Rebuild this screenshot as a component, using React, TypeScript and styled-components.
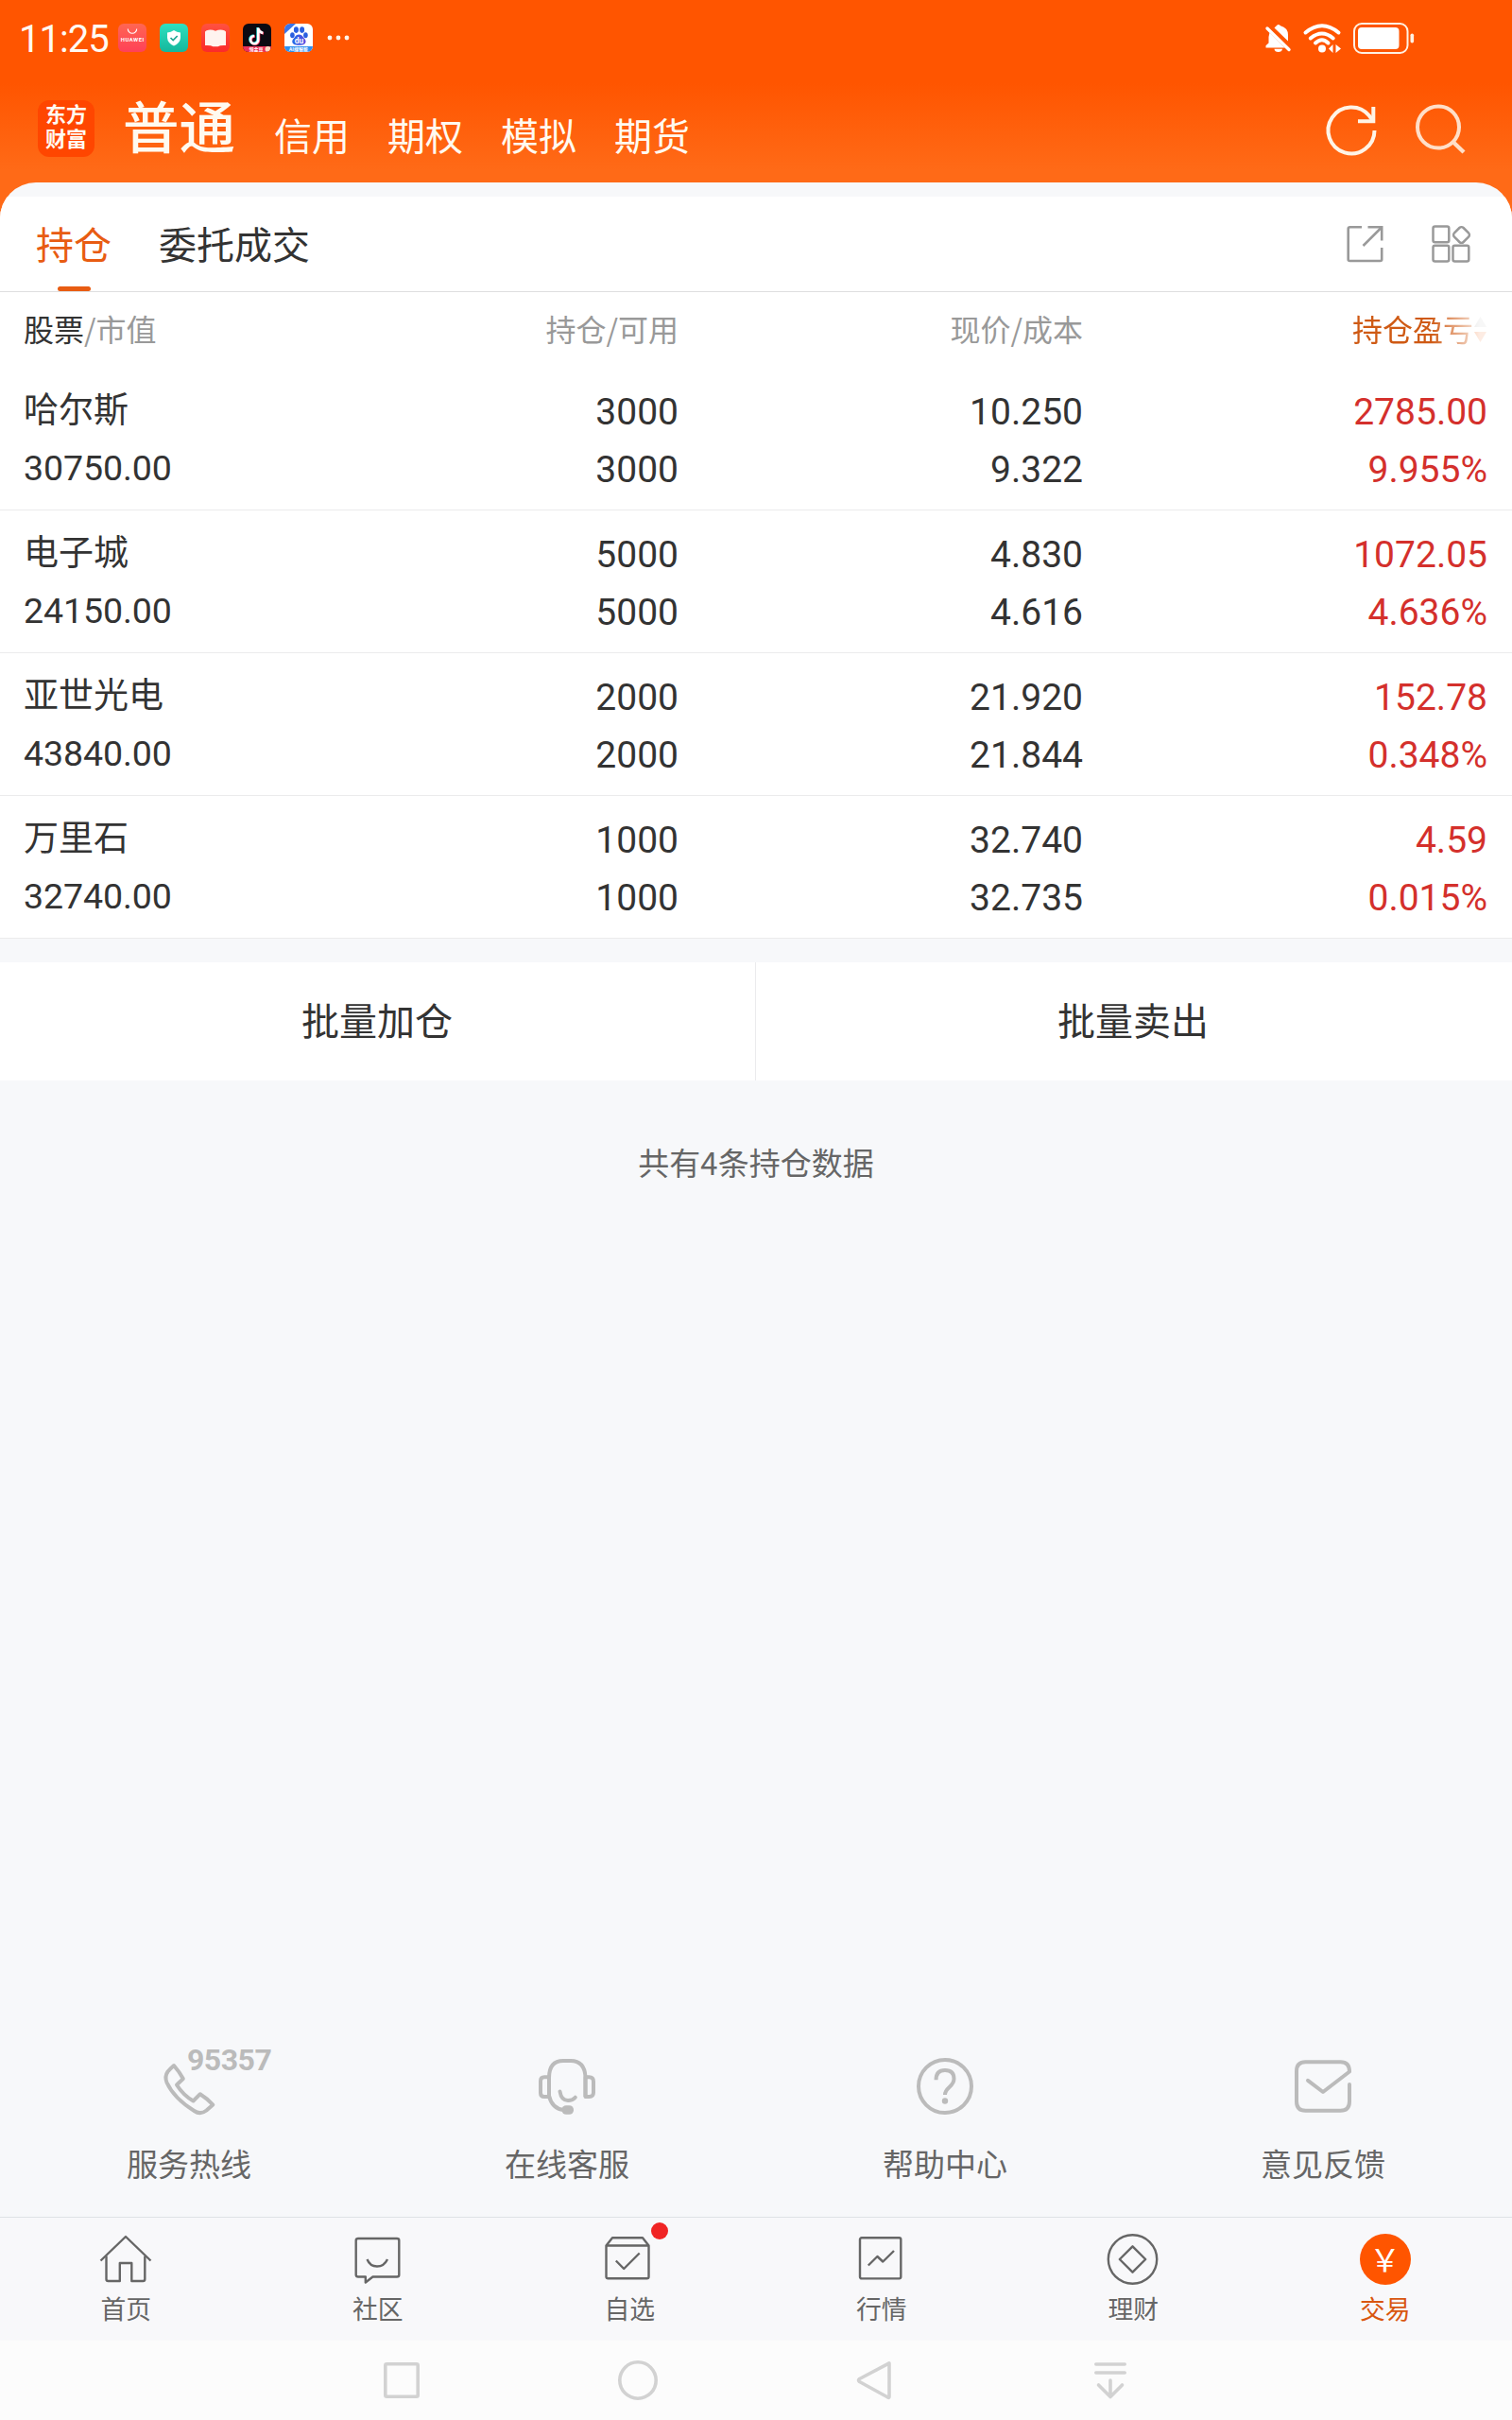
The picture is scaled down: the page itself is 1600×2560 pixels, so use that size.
import React from "react";
import styled, { createGlobalStyle } from "styled-components";

const CJK = `"Noto Sans CJK SC", sans-serif`;
const NUM = `Roboto, "Noto Sans CJK SC", sans-serif`;

const GlobalStyle = createGlobalStyle`
  * { box-sizing: border-box; }
  body { margin: 0; background: #f7f8fa; font-family: ${CJK}; color: #333; }
  svg { display: block; overflow: visible; flex: none; }
`;

const Screen = styled.div`
  width: 1600px;
  height: 2560px;
  display: flex;
  flex-direction: column;
  overflow: hidden;
  background: #f7f8fa;
`;

/* ---------- orange top area ---------- */

const TopArea = styled.header`
  height: 250px;
  margin-bottom: -57px;
  flex: none;
  background: linear-gradient(#ff5500 0, #ff5500 88px, #ff6a17 180px, #ff6a17 100%);
`;

const StatusBar = styled.div`
  height: 80px;
  padding: 0 103px 0 20px;
  display: flex;
  align-items: center;
  justify-content: space-between;
`;

const StatusGroup = styled.div<{ $gap: number }>`
  display: flex;
  align-items: center;
  gap: ${(p) => p.$gap}px;
`;

const Clock = styled.span`
  width: 91px;
  font: 400 40px/80px ${NUM};
  letter-spacing: -1px;
  color: #fffaf2;
  white-space: nowrap;
  padding-top: 3px;
`;

const NavBar = styled.nav`
  height: 113px;
  padding: 26px 49px 0 40px;
  display: flex;
  align-items: flex-start;
`;

const BrandLogo = styled.div`
  width: 60px;
  height: 60px;
  padding-top: 3px;
  border-radius: 12px;
  background: #ff4600;
  color: #fffaf2;
  text-align: center;
`;

const BrandLine = styled.div`
  height: 26px;
  font: 700 22px/26px ${NUM};
`;

const AccountMain = styled.span`
  width: 120px;
  margin-left: 30px;
  font-size: 59.5px;
  line-height: 50px;
  font-weight: 500;
  color: #fffaf0;
`;

const AccountTabs = styled.div`
  margin-left: 40px;
  display: flex;
  gap: 40px;
`;

const AccountTab = styled.span`
  font-size: 40px;
  line-height: 72px;
  color: #fffaf0;
`;

const NavActions = styled.div`
  margin-left: auto;
  padding-top: 3px;
  display: flex;
  gap: 40px;
`;

/* ---------- white sheet ---------- */

const Sheet = styled.main`
  position: relative;
  flex: 1;
  display: flex;
  flex-direction: column;
  padding-top: 15px;
  border-radius: 38px 38px 0 0;
  overflow: hidden;
  background: #f7f8fa;
`;

const TabStrip = styled.div`
  height: 101px;
  flex: none;
  padding: 0 43px 0 38px;
  display: flex;
  align-items: center;
  background: #fff;
  border-bottom: 1px solid #dfdfe0;
`;

const SheetTab = styled.div<{ $active?: boolean }>`
  position: relative;
  height: 100px;
  margin-right: 50px;
  font-size: 40px;
  line-height: 98px;
  color: ${(p) => (p.$active ? "#e85c12" : "#333")};
  ${(p) =>
    p.$active &&
    `&::after {
      content: "";
      position: absolute;
      left: 23px;
      bottom: 0;
      width: 35px;
      height: 5px;
      border-radius: 3px;
      background: #e85c12;
    }`}
`;

const StripActions = styled.div`
  margin-left: auto;
  display: flex;
  gap: 51px;
`;

const Table = styled.section`
  flex: none;
  background: #fff;
`;

const GridRow = styled.div`
  display: grid;
  grid-template-columns: 347px 346px 428px 428px;
  padding: 0 26px 0 25px;
`;

const HeadRow = styled(GridRow)`
  height: 80px;
`;

const HeadCell = styled.div<{ $left?: boolean }>`
  font-size: 32px;
  line-height: 77px;
  color: #999;
  text-align: ${(p) => (p.$left ? "left" : "right")};
  b {
    font-weight: 400;
    color: #333;
  }
`;

const SortCell = styled.div`
  display: flex;
  align-items: center;
  justify-content: flex-end;
  font-size: 32px;
  line-height: 77px;
  padding-bottom: 3px;
  color: #cf5a14;
  mask-image: linear-gradient(to right, #000 calc(100% - 60px), rgba(0, 0, 0, 0.12) calc(100% - 8px));
`;

const StockRow = styled(GridRow)`
  height: 151px;
  border-bottom: 1px solid #ebebec;
`;

const NameCell = styled.div`
  padding-top: 11px;
  display: flex;
  flex-direction: column;
  gap: 2px;
  line-height: 62px;
`;

const StockName = styled.span`
  font-size: 37px;
`;

const MarketValue = styled.span`
  font-family: ${NUM};
  font-size: 37.5px;
  letter-spacing: -0.1px;
`;

const ValueCell = styled.div<{ $gain?: boolean }>`
  padding-top: 17px;
  display: flex;
  flex-direction: column;
  align-items: flex-end;
  font: 400 39px/61px ${NUM};
  color: ${(p) => (p.$gain ? "#d4302c" : "#333")};
`;

const BatchBar = styled.div`
  flex: none;
  height: 125px;
  margin-top: 25px;
  display: grid;
  grid-template-columns: 1fr 1fr;
  background: #fff;
`;

const BatchButton = styled.button`
  border: 0;
  background: none;
  padding: 0 2px 5px 0;
  font: 400 40px/1 ${CJK};
  color: #333;
  & + & {
    border-left: 1px solid #ebebed;
    margin-left: -1px;
  }
`;

const CountNote = styled.p`
  flex: 1;
  margin: 0;
  text-align: center;
  font-size: 33px;
  line-height: 172px;
  color: #666;
`;

/* ---------- service shortcuts ---------- */

const Services = styled.section`
  flex: none;
  height: 168px;
  display: grid;
  grid-template-columns: repeat(4, 1fr);
`;

const Service = styled.div`
  display: flex;
  flex-direction: column;
  align-items: center;
  gap: 31px;
  font-size: 33px;
  line-height: 40px;
  color: #666;
`;

const ServiceIcon = styled.div`
  position: relative;
  width: 60px;
  height: 60px;
`;

const HotlineNumber = styled.span`
  position: absolute;
  left: 28px;
  top: -14px;
  font: 700 32px/32px ${NUM};
  letter-spacing: -0.5px;
  color: #bbb;
`;

/* ---------- bottom bars ---------- */

const BottomTabs = styled.nav`
  flex: none;
  height: 131px;
  padding: 17px 1px 0 0;
  display: grid;
  grid-template-columns: repeat(6, 1fr);
  background: #f8f8fa;
  border-top: 1px solid #dfe2e5;
`;

const BottomTab = styled.div<{ $active?: boolean }>`
  display: flex;
  flex-direction: column;
  align-items: center;
  gap: 9px;
  font-size: 26.8px;
  line-height: 32px;
  color: ${(p) => (p.$active ? "#d9560f" : "#666")};
`;

const TabIcon = styled.div`
  position: relative;
  width: 54px;
  height: 54px;
`;

const UnreadDot = styled.i`
  position: absolute;
  right: -14px;
  top: -12px;
  width: 18px;
  height: 18px;
  border-radius: 50%;
  background: #f02424;
`;

const SystemNav = styled.div`
  flex: none;
  height: 84px;
  padding: 0 300px;
  display: grid;
  grid-template-columns: repeat(4, 1fr);
  place-items: center;
  background: #fcfcfc;
`;

/* ---------- icons ---------- */

const AppIcons = () => (
  <>
    <svg width="30" height="30" viewBox="0 0 30 30">
      <defs>
        <linearGradient id="hw" x1="0" y1="0" x2="0" y2="1">
          <stop offset="0" stopColor="#ff6652" />
          <stop offset="1" stopColor="#ff4058" />
        </linearGradient>
      </defs>
      <rect width="30" height="30" rx="6" fill="url(#hw)" />
      <path d="M10.3 5.5a4.7 4.7 0 0 0 9.4 0" fill="none" stroke="#fff" strokeWidth="1.1" />
      <text x="15" y="19.4" textAnchor="middle" fontFamily="Roboto, sans-serif" fontWeight="700" fontSize="5.8" textLength="24.5" fill="#fff">
        HUAWEI
      </text>
    </svg>
    <svg width="30" height="30" viewBox="0 0 30 30">
      <defs>
        <linearGradient id="sh" x1="0" y1="0" x2="0" y2="1">
          <stop offset="0" stopColor="#2fe0c0" />
          <stop offset="1" stopColor="#14b79c" />
        </linearGradient>
      </defs>
      <rect width="30" height="30" rx="6" fill="url(#sh)" />
      <path d="M15 7Q18 9.3 22 9.6V15Q21.6 20.5 15 23.6Q8.4 20.5 8 15V9.6Q12 9.3 15 7Z" fill="#fff" />
      <path d="M11.5 15l2.7 2.6 4.5-4.6" fill="none" stroke="#1fa792" strokeWidth="1.7" />
    </svg>
    <svg width="30" height="30" viewBox="0 0 30 30">
      <defs>
        <linearGradient id="bk" x1="0" y1="0" x2="0" y2="1">
          <stop offset="0" stopColor="#ff5140" />
          <stop offset="1" stopColor="#fb2a2a" />
        </linearGradient>
      </defs>
      <rect width="30" height="30" rx="6" fill="url(#bk)" />
      <path d="M5.6 7.2Q10.5 5.8 15 7.8Q19.5 5.8 24.4 7.2L26 8.6V23Q20 22.6 17.6 24.2H12.4Q10 22.6 4 23V8.6Z" fill="#fff3ef" />
    </svg>
    <svg width="30" height="30" viewBox="0 0 30 30">
      <defs>
        <clipPath id="tk">
          <rect width="30" height="30" rx="6" />
        </clipPath>
      </defs>
      <g clipPath="url(#tk)">
        <rect width="30" height="30" fill="#0b0a12" />
        <g fill="none" strokeWidth="2.6">
          <path d="M15.6 4v12.6a4.1 4.1 0 1 1-4.1-4.1M15.6 4.6q.8 4.2 5 4.8" stroke="#35e6e4" />
          <path d="M17 5v12.6a4.1 4.1 0 1 1-4.1-4.1M17 5.6q.8 4.2 5 4.8" stroke="#f2335b" />
          <path d="M16.3 4.5v12.6a4.1 4.1 0 1 1-4.1-4.1M16.3 5.1q.8 4.2 5 4.8" stroke="#fff" />
        </g>
        <path d="M0 24H30V30H0Z" fill="#ec3158" />
        <text x="14" y="29" textAnchor="middle" fontFamily={CJK} fontWeight="700" fontSize="5" fill="#fff">
          领金豆
        </text>
        <circle cx="26.5" cy="27" r="3" fill="#ffd9c4" />
      </g>
    </svg>
    <svg width="30" height="30" viewBox="0 0 30 30">
      <defs>
        <clipPath id="bd">
          <rect width="30" height="30" rx="6" />
        </clipPath>
        <linearGradient id="paw" x1="0" y1="0" x2="1" y2="0">
          <stop offset="0" stopColor="#2468e6" />
          <stop offset="1" stopColor="#5a4be0" />
        </linearGradient>
      </defs>
      <g clipPath="url(#bd)">
        <rect width="30" height="30" fill="#fff" />
        <path d="M0 0H12L0 11Z" fill="#3b74e8" />
        <g fill="#2a5fe0">
          <ellipse cx="12.4" cy="6.6" rx="2.5" ry="3.3" />
          <ellipse cx="18.6" cy="6.6" rx="2.5" ry="3.3" />
          <ellipse cx="8.4" cy="12.2" rx="2.3" ry="3" />
          <ellipse cx="22.4" cy="12.2" rx="2.3" ry="3" />
        </g>
        <path
          d="M15.400 11.500Q18.400 11.500 20.400 14.900Q23.800 17.900 21.900 21.100Q20.300 23.100 15.400 22.700Q10.500 23.100 8.900 21.100Q7 17.900 10.400 14.900Q12.400 11.500 15.400 11.500Z"
          fill="url(#paw)"
        />
        <text x="15.500" y="21" textAnchor="middle" fontFamily="Roboto, sans-serif" fontWeight="700" fontSize="8.500" fill="#fff">
          du
        </text>
        <rect y="24" width="30" height="6" fill="#2f8fee" />
        <text x="15" y="29" textAnchor="middle" fontFamily={CJK} fontWeight="700" fontSize="5" fill="#fff">
          AI搜智能
        </text>
      </g>
    </svg>
    <svg width="26" height="30" viewBox="0 0 26 30" fill="#fff3e8">
      <circle cx="4" cy="15" r="2.4" />
      <circle cx="13" cy="15" r="2.4" />
      <circle cx="22" cy="15" r="2.4" />
    </svg>
  </>
);

const MuteIcon = () => (
  <svg width="27" height="31" viewBox="0 0 27 31">
    <path d="M4.500 9.500L20.500 25.500H.5V23.200L3.500 20.500V14Z" fill="#fff" />
    <path d="M9.500 4.500Q11 3 11.500 2.500Q13.500-.6 16 2.300Q24 4.500 24 12V18.500Z" fill="#fff" />
    <path d="M9.500 26.800H18Q17.500 30 13.700 30T9.500 26.800Z" fill="#fff" />
    <path d="M2 5L25 27.500" stroke="#fff" strokeWidth="3.400" strokeLinecap="round" />
  </svg>
);

const WifiIcon = () => (
  <svg width="40" height="31" viewBox="0 0 40 31" fill="none" stroke="#fff" strokeWidth="4" strokeLinecap="round">
    <path d="M2.500 9.500Q20-5 37.500 9.500" />
    <path d="M7.800 15.500Q20 5.500 31.700 15.500" />
    <path d="M13 20.500Q20 14 26.500 20.500" />
    <circle cx="20" cy="26.500" r="4" fill="#fff" stroke="none" />
    <path d="M27 26.500L31.500 22V31ZM40 26.500L34.500 22V31Z" fill="#fff" stroke="none" />
  </svg>
);

const BatteryIcon = () => (
  <svg width="65" height="33" viewBox="0 0 65 33">
    <rect x="1" y="1" width="56.500" height="31" rx="8" fill="none" stroke="#fff1e2" strokeWidth="2" />
    <rect x="5" y="5" width="43.500" height="23" rx="4" fill="#fff" />
    <rect x="60.500" y="11.500" width="3.600" height="10" rx="1.800" fill="#fff1e2" />
  </svg>
);

const RefreshIcon = () => (
  <svg width="54" height="54" viewBox="0 0 54 54" fill="none" stroke="#fff4e6" strokeWidth="4">
    <path d="M51.500 29A24.500 24.500 0 1 1 46 13.500L50 19" />
    <path d="M50.300 4V19.200H34" />
  </svg>
);

const SearchIcon = () => (
  <svg width="54" height="54" viewBox="0 0 54 54" fill="none" stroke="#ffdfc8" strokeWidth="4">
    <circle cx="25" cy="25.500" r="22" />
    <path d="M40.500 41L52 52" strokeWidth="4.400" />
  </svg>
);

const ShareIcon = () => (
  <svg width="39" height="40" viewBox="0 0 39 40" fill="none" stroke="#999" strokeWidth="2.600">
    <path d="M16 2.300H3.500Q1.700 2.300 1.700 4V36.500Q1.700 38 3.500 38H35.500Q37.200 38 37.200 36.500V24" />
    <path d="M22.500 2.300H37.200V16.500" />
    <path d="M37 2.500L17.500 22" />
  </svg>
);

const WidgetsIcon = () => (
  <svg width="42" height="40" viewBox="0 0 42 40" fill="none" stroke="#999" strokeWidth="2.500">
    <rect x="1.500" y="1.500" width="16.800" height="16.800" rx="2" />
    <rect x="1.500" y="21.800" width="16.800" height="16.800" rx="2" />
    <rect x="22.500" y="21.800" width="16.800" height="16.800" rx="2" />
    <rect x="24.700" y="3.700" width="13.600" height="13.600" rx="3" transform="rotate(45 31.500 10.500)" />
  </svg>
);

const SortIcon = () => (
  <svg width="15" height="30" viewBox="0 0 15 30">
    <path d="M7.500 2L14 13H1Z" fill="#bbb" />
    <path d="M7.500 29L14 18H1Z" fill="#f0651a" />
  </svg>
);

const lineProps = {
  width: 60,
  height: 60,
  viewBox: "0 0 60 60",
  fill: "none",
  stroke: "#bbb",
  strokeWidth: 4,
  strokeLinejoin: "round" as const,
  strokeLinecap: "round" as const,
};

const PhoneIcon = () => (
  <svg {...lineProps}>
    <path
      d="M14 8Q20.500 15.500 23.800 22L17 28.500Q24 39.500 34.500 45.500L41.800 38.200Q49.500 43 55.300 49.500L48.500 55.500Q42 60.500 35.500 56Q14 42.500 6.500 26Q4 19.500 7.500 14.500Q10 11.500 14 8Z"
    />
  </svg>
);

const HeadsetIcon = () => (
  <svg {...lineProps}>
    <path d="M11 41V21Q11 3 26 3H34Q48.500 3 49.500 20V41" strokeLinecap="butt" />
    <path d="M11 20.300H6Q2 20.300 2 24.500V37Q2 41 6 41H11" />
    <path d="M49.500 20.300H53.500Q58 20.300 58 25V36.500Q58 41 53.500 41H49.500Z" />
    <path d="M11 40Q14 53.500 26.500 55" />
    <rect x="24.500" y="50.300" width="12.500" height="9.500" rx="4.500" fill="#bbb" stroke="none" />
    <path d="M22.500 35.500Q24 45 31 45Q36 45 38.800 41.700" />
  </svg>
);

const HelpIcon = () => (
  <svg {...lineProps} strokeLinecap="butt">
    <circle cx="30" cy="30" r="28" />
    <path d="M20.500 23.300Q20.500 13 30 13Q39.500 13 39.500 22Q39.500 26.500 34.500 31Q30 35 30 39" />
    <circle cx="30" cy="45.500" r="3.200" fill="#bbb" stroke="none" />
  </svg>
);

const FeedbackIcon = () => (
  <svg {...lineProps}>
    <path d="M58 28V46Q58 55.800 48.500 55.800H11.500Q2 55.800 2 46V14Q2 4.200 11.500 4.200H48.500Q58 4.200 58 14.500L30 36L14 23.800" />
  </svg>
);

const tabLine = {
  width: 54,
  height: 54,
  viewBox: "0 0 54 54",
  fill: "none",
  stroke: "#666",
  strokeWidth: 2.4,
  strokeLinejoin: "round" as const,
};

const HomeIcon = () => (
  <svg {...tabLine}>
    <path d="M.5 28.500L27 3L53.500 28.500" />
    <path d="M6.500 23.500V48Q6.500 50 8.500 50H20.800V31H33.300V50H45.300Q47.300 50 47.300 48V23.500" />
  </svg>
);

const CommunityIcon = () => (
  <svg {...tabLine}>
    <path d="M6 5H47Q49.300 5 49.300 7V43.500Q49.300 45.500 47 45.500H21.500L13.800 51.500V45.500H6Q3.700 45.500 3.700 43.500V7Q3.700 5 6 5Z" />
    <path d="M15.500 27Q18.500 34.500 26 34.500T37 27" />
  </svg>
);

const WatchlistIcon = () => (
  <svg {...tabLine}>
    <path d="M2.500 12.500L9 4.200H41L47.500 12.500V45.500Q47.500 47.300 45.500 47.300H4.500Q2.500 47.300 2.500 45.500ZM2.500 12.500H47.500" />
    <path d="M12.800 28.500L21.200 37L37.700 20.500" />
  </svg>
);

const MarketIcon = () => (
  <svg {...tabLine}>
    <rect x="4" y="4.200" width="43.300" height="43.200" rx="1.800" />
    <path d="M12.800 33.500L22.400 24L28.300 29.500L40 18" />
  </svg>
);

const WealthIcon = () => (
  <svg {...tabLine}>
    <circle cx="26.500" cy="27" r="25.700" />
    <path d="M26.500 13.300L40.200 27L26.500 40.700L12.800 27Z" />
  </svg>
);

const TradeIcon = () => (
  <svg width="54" height="54" viewBox="0 0 54 54">
    <circle cx="27" cy="27" r="27" fill="#ff5500" />
    <text x="26.500" y="40" textAnchor="middle" fontFamily={CJK} fontSize="33" fill="#fff">
      ￥
    </text>
  </svg>
);

const sys = {
  width: 42,
  height: 42,
  viewBox: "0 0 42 42",
  fill: "none",
  stroke: "#d2d2d2",
  strokeWidth: 3.6,
  strokeLinejoin: "round" as const,
  strokeLinecap: "round" as const,
};

/* ---------- data ---------- */

const holdings = [
  { name: "哈尔斯", value: "30750.00", qty: "3000", avail: "3000", price: "10.250", cost: "9.322", pnl: "2785.00", pct: "9.955%" },
  { name: "电子城", value: "24150.00", qty: "5000", avail: "5000", price: "4.830", cost: "4.616", pnl: "1072.05", pct: "4.636%" },
  { name: "亚世光电", value: "43840.00", qty: "2000", avail: "2000", price: "21.920", cost: "21.844", pnl: "152.78", pct: "0.348%" },
  { name: "万里石", value: "32740.00", qty: "1000", avail: "1000", price: "32.740", cost: "32.735", pnl: "4.59", pct: "0.015%" },
];

const services = [
  { label: "服务热线", Icon: PhoneIcon, number: "95357" },
  { label: "在线客服", Icon: HeadsetIcon },
  { label: "帮助中心", Icon: HelpIcon },
  { label: "意见反馈", Icon: FeedbackIcon },
];

const tabs = [
  { label: "首页", Icon: HomeIcon },
  { label: "社区", Icon: CommunityIcon },
  { label: "自选", Icon: WatchlistIcon, unread: true },
  { label: "行情", Icon: MarketIcon },
  { label: "理财", Icon: WealthIcon },
  { label: "交易", Icon: TradeIcon, active: true },
];

export default function App() {
  return (
    <Screen>
      <GlobalStyle />
      <TopArea>
        <StatusBar>
          <StatusGroup $gap={14}>
            <Clock>11:25</Clock>
            <AppIcons />
          </StatusGroup>
          <StatusGroup $gap={13}>
            <MuteIcon />
            <WifiIcon />
            <BatteryIcon />
          </StatusGroup>
        </StatusBar>
        <NavBar>
          <BrandLogo>
            <BrandLine>东方</BrandLine>
            <BrandLine>财富</BrandLine>
          </BrandLogo>
          <AccountMain>普通</AccountMain>
          <AccountTabs>
            {["信用", "期权", "模拟", "期货"].map((t) => (
              <AccountTab key={t}>{t}</AccountTab>
            ))}
          </AccountTabs>
          <NavActions>
            <RefreshIcon />
            <SearchIcon />
          </NavActions>
        </NavBar>
      </TopArea>

      <Sheet>
        <TabStrip>
          <SheetTab $active>持仓</SheetTab>
          <SheetTab>委托成交</SheetTab>
          <StripActions>
            <ShareIcon />
            <WidgetsIcon />
          </StripActions>
        </TabStrip>

        <Table>
          <HeadRow>
            <HeadCell $left>
              <b>股票</b>/市值
            </HeadCell>
            <HeadCell>持仓/可用</HeadCell>
            <HeadCell>现价/成本</HeadCell>
            <SortCell>
              持仓盈亏
              <SortIcon />
            </SortCell>
          </HeadRow>
          {holdings.map((h) => (
            <StockRow key={h.name}>
              <NameCell>
                <StockName>{h.name}</StockName>
                <MarketValue>{h.value}</MarketValue>
              </NameCell>
              <ValueCell>
                <span>{h.qty}</span>
                <span>{h.avail}</span>
              </ValueCell>
              <ValueCell>
                <span>{h.price}</span>
                <span>{h.cost}</span>
              </ValueCell>
              <ValueCell $gain>
                <span>{h.pnl}</span>
                <span>{h.pct}</span>
              </ValueCell>
            </StockRow>
          ))}
        </Table>

        <BatchBar>
          <BatchButton>批量加仓</BatchButton>
          <BatchButton>批量卖出</BatchButton>
        </BatchBar>
        <CountNote>共有4条持仓数据</CountNote>

        <Services>
          {services.map(({ label, Icon, number }) => (
            <Service key={label}>
              <ServiceIcon>
                <Icon />
                {number && <HotlineNumber>{number}</HotlineNumber>}
              </ServiceIcon>
              {label}
            </Service>
          ))}
        </Services>
      </Sheet>

      <BottomTabs>
        {tabs.map(({ label, Icon, active, unread }) => (
          <BottomTab key={label} $active={active}>
            <TabIcon>
              <Icon />
              {unread && <UnreadDot />}
            </TabIcon>
            {label}
          </BottomTab>
        ))}
      </BottomTabs>

      <SystemNav>
        <svg {...sys}>
          <rect x="3.800" y="3.800" width="34.400" height="34.400" rx="1.500" />
        </svg>
        <svg {...sys}>
          <circle cx="21" cy="21" r="19.200" />
        </svg>
        <svg {...sys}>
          <path d="M36.500 3.200Q37 2 37 4V38Q37 40 35.500 39L5.500 22.500Q3.500 21 5.500 19.500Z" />
        </svg>
        <svg {...sys}>
          <path d="M5.800 4H36.200M5.800 13H36.200M21 21V38M8.500 26L21 38.500L33.500 26" />
        </svg>
      </SystemNav>
    </Screen>
  );
}
